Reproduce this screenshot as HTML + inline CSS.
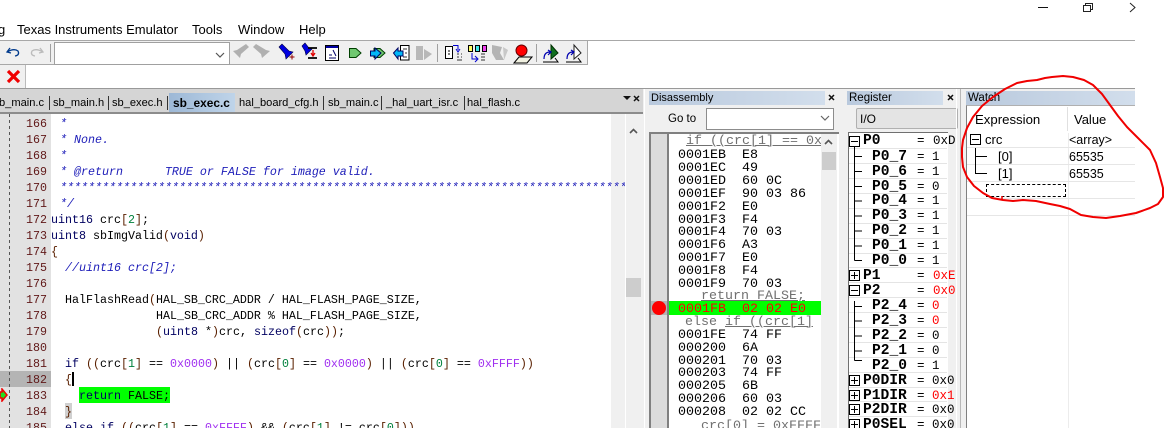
<!DOCTYPE html>
<html><head><meta charset="utf-8"><style>
html,body{margin:0;padding:0;background:#fff}
#r{position:relative;width:1164px;height:428px;overflow:hidden;background:#fff;font-family:"Liberation Sans",sans-serif;color:#000}
.a{position:absolute}
.t{position:absolute;white-space:pre;line-height:16px}
.m{font-family:"Liberation Mono",monospace;font-size:11.67px}
.d{font-family:"Liberation Mono",monospace;font-size:13.33px}
.c{color:#1c1cb8;font-style:italic}
.p{color:#5a2000}.n{color:#00803c}.h{color:#a030f0}.k{color:#000060}
.ln{position:absolute;left:18px;width:29px;text-align:right;color:#601818;font-family:"Liberation Mono",monospace;font-size:11.67px;line-height:16px}
.tab{position:absolute;top:95px;font-size:11.1px;line-height:16px;white-space:pre}
.sep{position:absolute;top:96px;width:1px;height:14px;background:#333}
.reg{position:absolute;font-family:"Liberation Mono",monospace;font-size:14.6px;font-weight:bold;line-height:15px;white-space:pre}
.regv{position:absolute;font-family:"Liberation Mono",monospace;font-size:12.5px;line-height:15px;white-space:pre}
.red{color:#f00}
.rl{position:absolute;left:849px;width:98px;height:1px;background:#e4e4e4}
.w{position:absolute;font-size:13px;line-height:16px;white-space:pre}
.wl{position:absolute;left:967px;width:168px;height:1px;background:#e6e6e6}
.box{position:absolute;width:9px;height:9px;border:1px solid #000;background:#fff}
.box:before{content:"";position:absolute;left:1px;top:4px;width:7px;height:1px;background:#000}
.plus:after{content:"";position:absolute;left:4px;top:1px;width:1px;height:7px;background:#000}
</style></head><body><div id="r">

<!-- window controls -->
<div class="a" style="left:1038px;top:7px;width:10px;height:1px;background:#111"></div>
<svg class="a" style="left:1080px;top:0" width="60" height="14" fill="none" stroke="#222" stroke-width="1"><rect x="3.500" y="5.500" width="7" height="6"/><path d="M5.500 5V3.500H12.500V9.500H11"/><path d="M50 3L55 7.500L50 12"/></svg>

<!-- menu -->
<div class="t" style="left:-2px;top:22px;font-size:13px">g</div>
<div class="t" style="left:17px;top:22px;font-size:13px">Texas Instruments Emulator</div>
<div class="t" style="left:192px;top:22px;font-size:13px">Tools</div>
<div class="t" style="left:238px;top:22px;font-size:13px">Window</div>
<div class="t" style="left:299px;top:22px;font-size:13px">Help</div>

<!-- toolbar -->
<div class="a" style="left:0;top:40px;width:1135px;height:1px;background:#a8a8a8"></div>
<div class="a" style="left:0;top:41px;width:587px;height:23px;background:#f0f0f0;border-right:1px solid #a8a8a8"></div>
<div class="a" style="left:0;top:64px;width:588px;height:1px;background:#a8a8a8"></div>
<div class="a" style="left:50px;top:44px;width:1px;height:18px;background:#a0a0a0"></div>
<div class="a" style="left:54px;top:42px;width:174px;height:21px;background:#fff;border:1px solid #a0a0a0"></div>
<svg class="a" style="left:0;top:40px" width="590" height="26">
<path d="M216 13L220 17L224 13" fill="none" stroke="#555" stroke-width="1.200"/>
<path d="M10 8L7 12L11 13M7 12Q14 8 18 11Q20 15 15 16" fill="none" stroke="#003a8c" stroke-width="1.300"/>
<path d="M40 8L43 12L39 13M43 12Q36 8 32 11Q30 15 35 16" fill="none" stroke="#bbb" stroke-width="1.300"/>
<g fill="#b0b0b0"><path d="M246 4L249 7L241 14L240 18L233 11L237 10Z"/><path d="M256 4L253 7L261 14L262 18L270 11L266 10Z"/></g>
<path d="M279 7L282 4L289 11L293 12L286 19L285 14Z" fill="#0000e0" stroke="#000040" stroke-width=".6"/>
<path d="M289.500 17H294.500M292 14.500V19.500" stroke="#900000" stroke-width="1" fill="none"/>
<path d="M302 6L305 3L309 8L312 9L306 15L305 11Z" fill="#0000e0" stroke="#000040" stroke-width=".6"/>
<path d="M308 8H317M308 18H317" stroke="#000" stroke-width="1.800"/>
<path d="M313 10V15M311 13L313 16L315 13" stroke="#e00000" stroke-width="1.300" fill="none"/>
<rect x="325.500" y="5.500" width="13" height="15" fill="#fff" stroke="#000"/><rect x="326" y="6" width="12" height="2" fill="#0000a0"/>
<path d="M329 18H336M329 15H332M333 10L336 16" stroke="#000066" stroke-width="1" fill="none"/>
<path d="M349.500 8.500H356L361 13L356 17.500H349.500Z" fill="#70c870" stroke="#004000"/>
<path d="M374 8.500H380L385 13L380 17.500H374Z" fill="#70c870" stroke="#004000"/>
<path d="M370.500 11H375V8L381 13L375 19V16H370.500Z" fill="#00b8f8" stroke="#000060"/>
<path d="M400.500 5.500H409V20H400.500Z" fill="#fff" stroke="#000"/>
<path d="M403 9H407M405 13H407M403 17H407" stroke="#333"/>
<path d="M393.500 13L398 8V11H403V16H398V19Z" fill="#00b8f8" stroke="#000060"/>
<path d="M416 6H423V20H416ZM424 9L432 14L424 20Z" fill="#b8b8b8"/>
<rect x="437" y="4" width="1" height="18" fill="#a0a0a0"/>
<path d="M445.500 6.500H452.500V18.500H445.500Z" fill="#fff" stroke="#000"/><path d="M448 11H450M448 14H450" stroke="#000"/>
<path d="M453 5.500H458V10M456 9L458 12L460 9" stroke="#0000d0" fill="none"/>
<path d="M457 14H459M461 14H462M457 17H459M461 17H462M457 20H462" stroke="#333"/>
<rect x="468.500" y="5.500" width="4" height="6" fill="#ffff60" stroke="#000"/><rect x="475.500" y="5.500" width="4" height="6" fill="#40e8e8" stroke="#000"/><rect x="482.500" y="5.500" width="4" height="6" fill="#f040f0" stroke="#000"/>
<path d="M472 13V19H477M475 16L478 19L475 22" stroke="#0000d0" fill="none"/>
<path d="M481 14H485M481 17H485M481 20H485" stroke="#333"/>
<path d="M492 5L502 7L500 13L504 20H496L492 13Z" fill="#b4b4b4"/><path d="M503 7L508 10L504 20Z" fill="#c8c8c8"/>
<circle cx="521.500" cy="10.500" r="5.500" fill="#f00" stroke="#600"/>
<path d="M514 23L519 17H532L527 23Z" fill="#f0f0e0" stroke="#000"/>
<rect x="536" y="4" width="1" height="18" fill="#a0a0a0"/>
<path d="M551 5L558 13L551 19Z" fill="#107020" stroke="#003000"/>
<path d="M544 19Q544 12 550 12M548 10L551 12L548 15" stroke="#0000b0" fill="none" stroke-width="1.200"/>
<path d="M543 22H558L555 18" stroke="#000" fill="none"/>
<path d="M574 5L581 13L574 19Z" fill="#fff" stroke="#222"/>
<path d="M567 19Q567 12 573 12M571 10L574 12L571 15" stroke="#0000b0" fill="none" stroke-width="1.200"/>
<path d="M566 22H581L578 18" stroke="#000" fill="none"/>
</svg>

<!-- second toolbar -->
<div class="a" style="left:0;top:65px;width:25px;height:23px;background:#f0f0f0;border-right:1px solid #bbb"></div>
<svg class="a" style="left:5px;top:69px" width="17" height="15"><path d="M3 2L14 13M14 2L3 13" stroke="#f00000" stroke-width="3.200"/></svg>

<!-- panels bg -->
<div class="a" style="left:0;top:88px;width:1135px;height:340px;background:#f0f0f0"></div>
<div class="a" style="left:0;top:88px;width:1135px;height:1px;background:#999"></div>
<div class="a" style="left:0;top:89px;width:643px;height:23px;background:#d5d5d5"></div>
<div class="a" style="left:0;top:112px;width:643px;height:2px;background:#8c8c8c"></div>

<!-- tabs -->
<div class="a" style="left:169px;top:93px;width:66px;height:19px;background:linear-gradient(90deg,#9db8d6,#bfd4e9)"></div>
<div class="tab" style="left:-1px;">b_main.c</div><div class="sep" style="left:49px"></div>
<div class="tab" style="left:53px">sb_main.h</div><div class="sep" style="left:108px"></div>
<div class="tab" style="left:112px">sb_exec.h</div><div class="sep" style="left:167px"></div>
<div class="tab" style="left:173px;font-weight:bold;font-size:11.9px">sb_exec.c</div>
<div class="tab" style="left:239px">hal_board_cfg.h</div><div class="sep" style="left:323px"></div>
<div class="tab" style="left:328px">sb_main.c</div><div class="sep" style="left:381px"></div>
<div class="tab" style="left:386px">_hal_uart_isr.c</div><div class="sep" style="left:464px"></div>
<div class="tab" style="left:467px">hal_flash.c</div>
<svg class="a" style="left:622px;top:94px" width="20" height="10"><path d="M1 2H9L5 6Z" fill="#111"/><path d="M12 2L17 7M17 2L12 7" stroke="#111" stroke-width="1.500"/></svg>

<!-- editor -->
<div class="a" style="left:0;top:114px;width:643px;height:314px;background:#fff"></div>
<div class="a" style="left:0;top:114px;width:51px;height:314px;background:#e2e2e2"></div>
<div class="a" style="left:0;top:371px;width:51px;height:16px;background:#b4b4b4"></div>
<div class="a" style="left:9px;top:114px;width:1px;height:314px;background:repeating-linear-gradient(#555 0 3px,transparent 3px 6px)"></div>
<div class="a" style="left:611px;top:114px;width:14px;height:314px;background:#f0f0f0"></div>
<div class="a" style="left:625px;top:114px;width:1px;height:314px;background:#fff"></div>
<div class="a" style="left:626px;top:114px;width:17px;height:314px;background:#f0f0f0"></div>
<div class="a" style="left:626px;top:278px;width:15px;height:19px;background:#cdcdcd"></div>
<svg class="a" style="left:629px;top:128px" width="10" height="7"><path d="M1 5L4.500 1.500L8 5" fill="none" stroke="#555" stroke-width="1.600"/></svg>
<div class="a" style="left:65px;top:403px;width:7px;height:16px;background:#d0d0d0"></div>
<div class="a" style="left:79px;top:387px;width:91px;height:16px;background:#00ff00"></div>
<div class="a" style="left:72px;top:372px;width:2px;height:14px;background:#000"></div>
<svg class="a" style="left:0;top:388px" width="9" height="14"><path d="M0 4H2V1L7 7L2 13V10H0Z" fill="#20e020" stroke="#f00000" stroke-width="1.500"/></svg>

<div class="ln" style="top:116px">166</div><div class="ln" style="top:132px">167</div><div class="ln" style="top:148px">168</div><div class="ln" style="top:164px">169</div><div class="ln" style="top:180px">170</div><div class="ln" style="top:196px">171</div><div class="ln" style="top:212px">172</div><div class="ln" style="top:228px">173</div><div class="ln" style="top:244px">174</div><div class="ln" style="top:260px">175</div><div class="ln" style="top:276px">176</div><div class="ln" style="top:292px">177</div><div class="ln" style="top:308px">178</div><div class="ln" style="top:324px">179</div><div class="ln" style="top:340px">180</div><div class="ln" style="top:356px">181</div><div class="ln" style="top:372px">182</div><div class="ln" style="top:388px">183</div><div class="ln" style="top:404px">184</div><div class="ln" style="top:420px">185</div>

<div class="t m c" style="left:60px;top:116px">*</div>
<div class="t m c" style="left:60px;top:132px">* None.</div>
<div class="t m c" style="left:60px;top:148px">*</div>
<div class="t m c" style="left:60px;top:164px">* @return      TRUE or FALSE for image valid.</div>
<div class="t m c" style="left:60px;top:180px;width:565px;overflow:hidden">*********************************************************************************</div>
<div class="t m c" style="left:60px;top:196px">*/</div>
<div class="t m" style="left:51px;top:212px"><span class="k">uint16</span> crc<span class="p">[</span><span class="n">2</span><span class="p">]</span>;</div>
<div class="t m" style="left:51px;top:228px"><span class="k">uint8</span> sbImgValid<span class="p">(</span><span class="k">void</span><span class="p">)</span></div>
<div class="t m p" style="left:51px;top:244px">{</div>
<div class="t m c" style="left:65px;top:260px">//uint16 crc[2];</div>
<div class="t m" style="left:65px;top:292px">HalFlashRead<span class="p">(</span>HAL_SB_CRC_ADDR / HAL_FLASH_PAGE_SIZE,</div>
<div class="t m" style="left:156px;top:308px">HAL_SB_CRC_ADDR % HAL_FLASH_PAGE_SIZE,</div>
<div class="t m" style="left:156px;top:324px"><span class="p">(</span><span class="k">uint8</span> *<span class="p">)</span>crc, <span class="k">sizeof</span><span class="p">(</span>crc<span class="p">))</span>;</div>
<div class="t m" style="left:65px;top:356px"><span class="k">if</span> <span class="p">((</span>crc<span class="p">[</span><span class="n">1</span><span class="p">]</span> == <span class="h">0x0000</span><span class="p">)</span> || <span class="p">(</span>crc<span class="p">[</span><span class="n">0</span><span class="p">]</span> == <span class="h">0x0000</span><span class="p">)</span> || <span class="p">(</span>crc<span class="p">[</span><span class="n">0</span><span class="p">]</span> == <span class="h">0xFFFF</span><span class="p">))</span></div>
<div class="t m p" style="left:65px;top:372px">{</div>
<div class="t m" style="left:79px;top:388px"><span class="k">return</span> FALSE;</div>
<div class="t m p" style="left:65px;top:404px">}</div>
<div class="t m" style="left:65px;top:420px"><span class="k">else if</span> <span class="p">((</span>crc<span class="p">[</span><span class="n">1</span><span class="p">]</span> == <span class="h">0xFFFF</span><span class="p">)</span> &amp;&amp; <span class="p">(</span>crc<span class="p">[</span><span class="n">1</span><span class="p">]</span> != crc<span class="p">[</span><span class="n">0</span><span class="p">]))</span></div>

<!-- Disassembly -->
<div class="a" style="left:644px;top:89px;width:1px;height:339px;background:#fff"></div>
<div class="a" style="left:649px;top:91px;width:176px;height:14px;background:linear-gradient(90deg,#b9c9dd,#d2deec)"></div>
<div class="t" style="left:651px;top:90px;font-size:11px">Disassembly</div>
<svg class="a" style="left:828px;top:94px" width="10" height="9"><path d="M1 1L6 6M6 1L1 6" stroke="#111" stroke-width="1.500"/></svg>
<div class="t" style="left:668px;top:111px;font-size:11.5px">Go to</div>
<div class="a" style="left:706px;top:108px;width:126px;height:20px;background:#fff;border:1px solid #8c8c8c"></div>
<svg class="a" style="left:820px;top:115px" width="10" height="7"><path d="M1 1L5 5L9 1" fill="none" stroke="#666" stroke-width="1.200"/></svg>
<div class="a" style="left:649px;top:132px;width:190px;height:296px;background:#fff;border-left:2px solid #808080;border-top:2px solid #808080;box-sizing:border-box"></div>
<div class="a" style="left:651px;top:134px;width:16px;height:294px;background:#dcdcdc"></div>
<div class="a" style="left:667px;top:134px;width:2px;height:294px;background:#808080"></div>
<div class="a" style="left:821px;top:134px;width:16px;height:294px;background:#f0f0f0"></div>
<div class="a" style="left:822px;top:152px;width:14px;height:18px;background:#cdcdcd"></div>
<svg class="a" style="left:824px;top:139px" width="10" height="7"><path d="M1 5L4.500 1.500L8 5" fill="none" stroke="#555" stroke-width="1.600"/></svg>
<div class="a" style="left:651px;top:301px;width:16px;height:14px;background:#b4b4b4"></div>
<div class="a" style="left:669px;top:301px;width:152px;height:14px;background:#00ff00"></div>
<div class="a" style="left:652px;top:301px;width:14px;height:14px;border-radius:7px;background:#f00"></div>
<div class="t d" style="left:686px;top:134px;color:#707070;width:135px;overflow:hidden;text-decoration:underline">if ((crc[1] == 0x</div>
<div class="t d" style="left:678px;top:150px;line-height:12.9px">0001EB  E8
0001EC  49
0001ED  60 0C
0001EF  90 03 86
0001F2  E0
0001F3  F4
0001F4  70 03
0001F6  A3
0001F7  E0
0001F8  F4
0001F9  70 03</div>
<div class="t d" style="left:701px;top:289px;color:#707070;text-decoration:underline">return FALSE;</div>
<div class="t d red" style="left:678px;top:302px">0001FB  02 02 E0</div>
<div class="t d" style="left:685px;top:315px;color:#707070;width:136px;overflow:hidden">else <span style="text-decoration:underline">if ((crc[1]</span></div>
<div class="t d" style="left:678px;top:330px;line-height:12.8px">0001FE  74 FF
000200  6A
000201  70 03
000203  74 FF
000205  6B
000206  60 03
000208  02 02 CC</div>
<div class="t d" style="left:701px;top:419px;color:#707070;width:120px;overflow:hidden;text-decoration:underline">crc[0] = 0xFFFF</div>

<!-- Register -->
<div class="a" style="left:847px;top:91px;width:96px;height:14px;background:linear-gradient(90deg,#b9c9dd,#d2deec)"></div>
<div class="t" style="left:849px;top:90px;font-size:11.500px">Register</div>
<svg class="a" style="left:947px;top:94px" width="10" height="9"><path d="M1 1L6 6M6 1L1 6" stroke="#111" stroke-width="1.500"/></svg>
<div class="a" style="left:856px;top:108px;width:102px;height:21px;background:#e4e4e4;border:1px solid #b0b0b0;border-radius:2px;box-sizing:border-box"></div>
<div class="t" style="left:860px;top:111px;font-size:12px">I/O</div>
<div class="a" style="left:848px;top:132px;width:100px;height:296px;background:#fff;border-left:1px solid #707070;border-top:1px solid #707070;box-sizing:border-box"></div>
<div class="a" style="left:948px;top:132px;width:8px;height:296px;background:#f0f0f0"></div>
<div class="a" style="left:956px;top:89px;width:1px;height:339px;background:#fff"></div>
<div class="rl" style="top:148px"></div><div class="rl" style="top:163px"></div><div class="rl" style="top:178px"></div><div class="rl" style="top:193px"></div><div class="rl" style="top:208px"></div><div class="rl" style="top:223px"></div><div class="rl" style="top:238px"></div><div class="rl" style="top:253px"></div><div class="rl" style="top:267px"></div><div class="rl" style="top:282px"></div><div class="rl" style="top:297px"></div><div class="rl" style="top:312px"></div><div class="rl" style="top:327px"></div><div class="rl" style="top:342px"></div><div class="rl" style="top:357px"></div><div class="rl" style="top:372px"></div><div class="rl" style="top:387px"></div><div class="rl" style="top:401px"></div><div class="rl" style="top:416px"></div>
<svg class="a" style="left:849px;top:134px" width="14" height="294" stroke="#000" fill="none"><path d="M5.500 12V126.500M5.500 22.500H13M5.500 37.500H13M5.500 52.500H13M5.500 67H13M5.500 82H13M5.500 97H13M5.500 112H13M5.500 126.500H13M5.500 167V226.500M5.500 172.500H13M5.500 187H13M5.500 202H13M5.500 217H13M5.500 226.500H13"/></svg>
<div class="box" style="left:849px;top:136px"></div><div class="box plus" style="left:849px;top:270px"></div><div class="box" style="left:849px;top:285px"></div><div class="box plus" style="left:849px;top:375px"></div><div class="box plus" style="left:849px;top:390px"></div><div class="box plus" style="left:849px;top:404px"></div><div class="box plus" style="left:849px;top:419px"></div>

<div class="reg" style="left:863px;top:134px">P0</div><div class="regv" style="left:917px;top:134px">=</div><div class="regv" style="left:933px;top:134px">0xD</div>
<div class="reg" style="left:872px;top:150px">P0_7</div><div class="regv" style="left:917px;top:150px">= 1</div>
<div class="reg" style="left:872px;top:165px">P0_6</div><div class="regv" style="left:917px;top:165px">= 1</div>
<div class="reg" style="left:872px;top:180px">P0_5</div><div class="regv" style="left:917px;top:180px">= 0</div>
<div class="reg" style="left:872px;top:194px">P0_4</div><div class="regv" style="left:917px;top:194px">= 1</div>
<div class="reg" style="left:872px;top:209px">P0_3</div><div class="regv" style="left:917px;top:209px">= 1</div>
<div class="reg" style="left:872px;top:224px">P0_2</div><div class="regv" style="left:917px;top:224px">= 1</div>
<div class="reg" style="left:872px;top:239px">P0_1</div><div class="regv" style="left:917px;top:239px">= 1</div>
<div class="reg" style="left:872px;top:254px">P0_0</div><div class="regv" style="left:917px;top:254px">= 1</div>
<div class="reg" style="left:863px;top:269px">P1</div><div class="regv" style="left:917px;top:269px">= <span class="red" style="position:relative;left:1px">0xE</span></div>
<div class="reg" style="left:863px;top:284px">P2</div><div class="regv" style="left:917px;top:284px">= <span class="red" style="position:relative;left:1px">0x0</span></div>
<div class="reg" style="left:872px;top:299px">P2_4</div><div class="regv" style="left:917px;top:299px">= <span class="red">0</span></div>
<div class="reg" style="left:872px;top:314px">P2_3</div><div class="regv" style="left:917px;top:314px">= <span class="red">0</span></div>
<div class="reg" style="left:872px;top:329px">P2_2</div><div class="regv" style="left:917px;top:329px">= 0</div>
<div class="reg" style="left:872px;top:344px">P2_1</div><div class="regv" style="left:917px;top:344px">= 0</div>
<div class="reg" style="left:872px;top:359px">P2_0</div><div class="regv" style="left:917px;top:359px">= 1</div>
<div class="reg" style="left:863px;top:374px">P0DIR</div><div class="regv" style="left:917px;top:374px">= 0x0</div>
<div class="reg" style="left:863px;top:389px">P1DIR</div><div class="regv" style="left:917px;top:389px">= <span class="red">0x1</span></div>
<div class="reg" style="left:863px;top:403px">P2DIR</div><div class="regv" style="left:917px;top:403px">= 0x0</div>
<div class="reg" style="left:863px;top:418px">P0SEL</div><div class="regv" style="left:917px;top:418px">= 0x0</div>

<!-- Watch -->
<div class="a" style="left:960px;top:89px;width:1px;height:339px;background:#b8b8b8"></div>
<div class="a" style="left:966px;top:91px;width:169px;height:14px;background:linear-gradient(90deg,#b9c9dd,#d2deec)"></div>
<div class="t" style="left:968px;top:90px;font-size:11.5px">Watch</div>
<div class="a" style="left:966px;top:105px;width:169px;height:323px;background:#fff;border-left:1px solid #808080;border-top:1px solid #b0b0b0;box-sizing:border-box"></div>
<div class="a" style="left:1067px;top:107px;width:1px;height:24px;background:#e0e0e0"></div>
<div class="a" style="left:1068px;top:133px;width:1px;height:295px;background:#ececec"></div>
<div class="w" style="left:975px;top:112px;font-size:13.2px">Expression</div>
<div class="w" style="left:1074px;top:112px">Value</div>
<div class="wl" style="top:147px"></div><div class="wl" style="top:164px"></div><div class="wl" style="top:181px"></div><div class="wl" style="top:198px"></div><div class="wl" style="top:215px"></div>
<div class="box" style="left:970px;top:134px"></div>
<svg class="a" style="left:970px;top:145px" width="20" height="32" stroke="#000" fill="none"><path d="M5.500 3V28.500H17M5.500 11.500H17"/></svg>
<div class="w" style="left:985px;top:132px">crc</div>
<div class="w" style="left:998px;top:149px">[0]</div>
<div class="w" style="left:998px;top:166px">[1]</div>
<div class="w" style="left:1069px;top:132px;font-size:12.5px">&lt;array&gt;</div>
<div class="w" style="left:1069px;top:149px;font-size:12.5px">65535</div>
<div class="w" style="left:1069px;top:166px;font-size:12.5px">65535</div>
<div class="a" style="left:986px;top:184px;width:78px;height:11px;border:1px dashed #000"></div>

<!-- hand-drawn circle -->
<svg class="a" style="left:0;top:0" width="1164" height="428"><polyline fill="none" stroke="#f00000" stroke-width="2" stroke-linejoin="round" stroke-linecap="round" points="1037,80 1045,78 1052,77 1063,76 1073,77 1084,80 1093,85 1102,94 1110,105 1118,116 1127,127 1138,138 1150,150 1156,163 1160,177 1163,188 1163,197 1158,204 1150,208 1136,213 1120,216 1106,218 1093,217 1081,215 1070,209 1060,206 1050,204 1036,201 1023,200 1013,201 1003,200 992,198 983,193 974,186 967,177 963,167 962,157 962,148 963,140 967,128 973,117 982,106 993,97 1005,89 1017,83 1027,81 1037,80"/><path d="M1002 196V200" stroke="#f00000" stroke-width="1.500"/></svg>
</div></body></html>
